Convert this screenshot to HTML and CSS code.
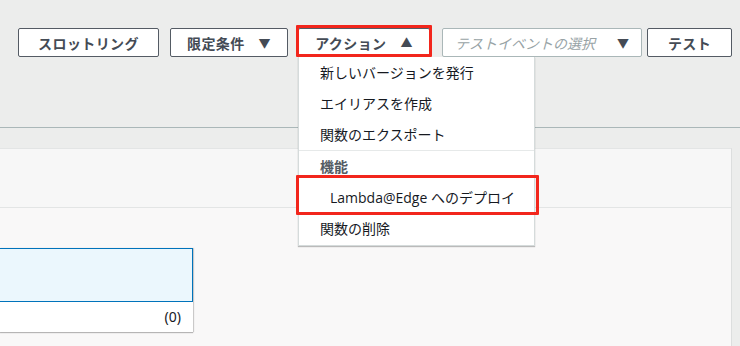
FILE: index.html
```html
<!DOCTYPE html>
<html lang="ja">
<head>
<meta charset="utf-8">
<title>Lambda actions</title>
<link rel="stylesheet" href="styles.css">
</head>
<body>
<header class="top">
  <div class="toolbar">
    <button class="btn w-throttle">スロットリング</button>
    <button class="btn w-qual">限定条件 <span class="caret">▼</span></button>
    <div class="action-wrap">
      <button class="btn w-action">アクション <span class="caret">▲</span></button>
      <span class="mark mark-btn"></span>
      <ul class="menu">
        <li class="item">新しいバージョンを発行</li>
        <li class="item">エイリアスを作成</li>
        <li class="item">関数のエクスポート</li>
        <li class="group">機能</li>
        <li class="item sub">Lambda@Edge へのデプロイ</li>
        <li class="item last">関数の削除</li>
        <li class="mark mark-item"></li>
      </ul>
    </div>
    <div class="select"><span class="ph">テストイベントの選択</span><span class="caret">▼</span></div>
    <button class="btn w-test">テスト</button>
  </div>
</header>
<div class="band"></div>
<main class="panel">
  <div class="panel-head"></div>
  <div class="panel-body">
    <div class="card">
      <div class="card-sel"></div>
      <div class="card-row">(0)</div>
    </div>
  </div>
</main>
</body>
</html>
```
FILE: styles.css
```css
* { box-sizing: border-box; }
html, body { margin: 0; padding: 0; }
body {
  width: 740px;
  height: 346px;
  overflow: hidden;
  background: #ecedec;
  font-family: "Noto Sans", "Noto Sans CJK JP", sans-serif;
  font-size: 14px;
  color: #16191f;
}
.top {
  height: 128px;
  border-bottom: 1px solid #aab7b8;
}
.toolbar {
  display: flex;
  justify-content: flex-end;
  padding: 28px 8px 0 0;
}
.btn {
  height: 29px;
  margin: 0;
  padding: 0;
  border: 1px solid #545b64;
  border-radius: 2px;
  background: #fff;
  color: #444b55;
  font-family: "Noto Sans CJK JP", "Noto Sans", sans-serif;
  font-weight: 700;
  font-size: 14px;
  letter-spacing: 0.4px;
  display: flex;
  align-items: center;
  justify-content: center;
  gap: 14px;
}
.caret { font-size: 12px; color: #444b55; }
.w-throttle { width: 141px; margin-right: 11px; }
.w-qual { width: 118px; margin-right: 10px; }
.w-action { width: 132px; }
.w-test { width: 85px; }
.action-wrap { position: relative; margin-right: 12px; }
.mark {
  position: absolute;
  border: 3px solid #f2261c;
  border-radius: 1px;
  pointer-events: none;
  list-style: none;
}
.mark-btn { left: -2px; top: -3px; width: 136px; height: 32px; }
.select {
  width: 200px;
  height: 29px;
  margin-right: 5px;
  background: #fff;
  border: 1px solid #aab7b8;
  border-radius: 2px;
  display: flex;
  align-items: center;
  justify-content: space-between;
  padding: 0 12px 0 12px;
}
.ph {
  font-family: "Noto Sans CJK JP", sans-serif;
  font-style: italic;
  color: #98a3a6;
  font-size: 14px;
}
.menu {
  position: absolute;
  left: 0;
  top: 29px;
  width: 237px;
  margin: 0;
  padding: 0 0 1px;
  list-style: none;
  background: #fff;
  border: 1px solid #d5dbdb;
  border-top: none;
  box-shadow: 0 1px 1px rgba(0,0,0,0.25);
  font-family: "Noto Sans CJK JP", "Noto Sans", sans-serif;
  z-index: 5;
}
.menu li { line-height: 31px; padding-left: 21px; font-size: 14px; color: #16191f; }
.menu .group {
  border-top: 1px solid #e6e9e9;
  margin-top: 0;
  font-weight: 600;
  color: #545b64;
  line-height: 31px;
}
.menu .sub { padding-left: 31px; font-family: "Open Sans", "Noto Sans CJK JP", sans-serif; }
.menu .last { line-height: 31px; }
.menu .mark-item {
  left: -3px;
  top: 118px;
  width: 243px;
  height: 40px;
  padding: 0;
}
.band { height: 20px; }
.panel {
  width: 732px;
  height: 198px;
  background: #f9f8f8;
  border-right: 1px solid #dcdede;
  border-top: 1px solid #e3e5e5;
}
.panel-head {
  height: 59px;
  background: #f7f7f7;
  border-bottom: 1px solid #e3e5e5;
}
.panel-body { padding-top: 40px; }
.card {
  width: 193px;
  background: #fff;
  box-shadow: 0 1px 1px rgba(0,0,0,0.25), 1px 0 1px rgba(0,0,0,0.15);
}
.card-sel {
  height: 54px;
  background: #ebf7fd;
  border: 1px solid #0073bb;
  border-left: none;
}
.card-row {
  height: 30px;
  line-height: 30px;
  text-align: right;
  padding-right: 12px;
  font-size: 14px;
  color: #16191f;
}
```
